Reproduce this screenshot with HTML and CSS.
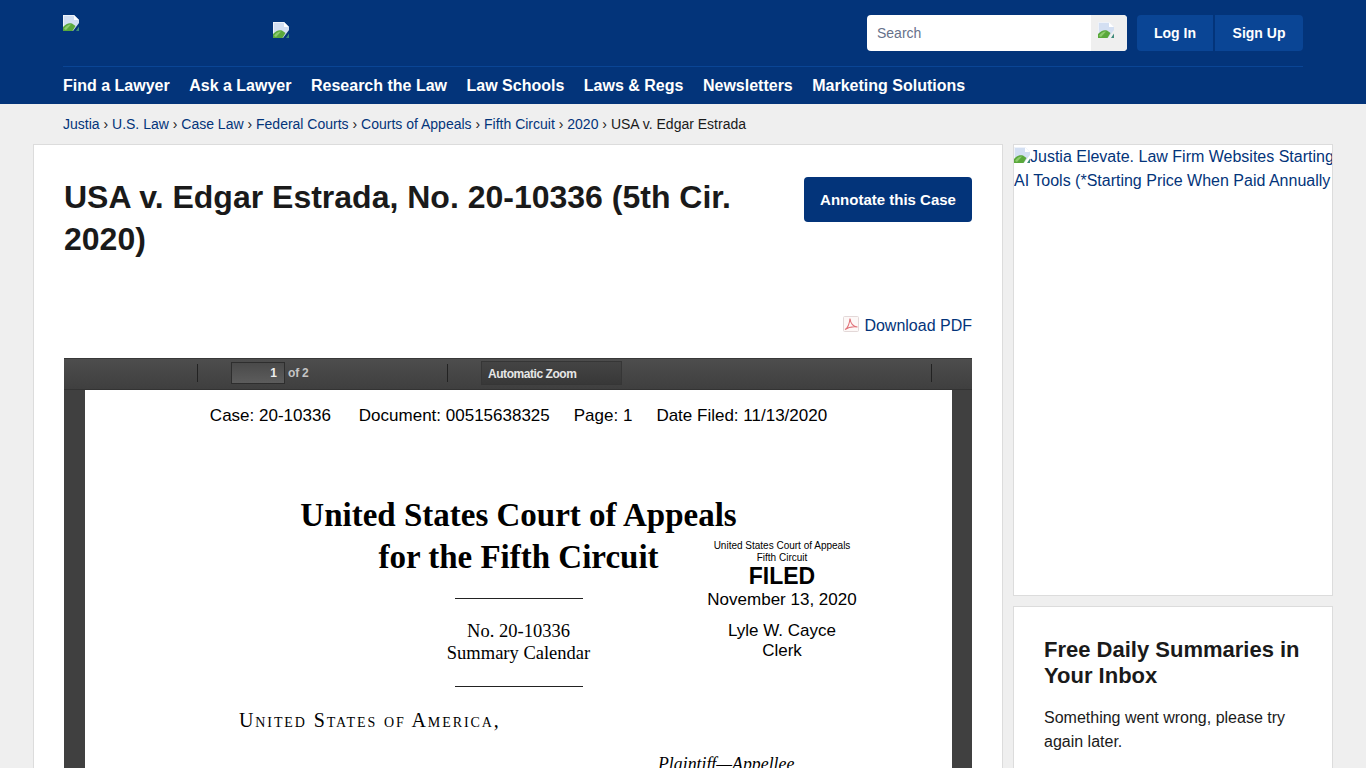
FILE: index.html

```html
<!DOCTYPE html>
<html lang="en">
<head>
  <meta charset="UTF-8" />
  <meta name="viewport" content="width=device-width, initial-scale=1.0" />
  <title>USA v. Edgar Estrada, No. 20-10336 (5th Cir. 2020)</title>
  <link rel="stylesheet" href="styles.css">
</head>
<body>
  <svg class="sprite" width="0" height="0" aria-hidden="true">
    <symbol id="broken" viewBox="0 0 16 16">
      <path d="M0 0H11L16 5V8L10 16H0Z" fill="#d3dff2"/>
      <path d="M11 0V5H16Z" fill="#fff"/>
      <path d="M0 0H11V1H1V15H0Z" fill="#eef2f9"/>
      <path d="M0 16V12C3 8.500 6 7.500 9 8.500L12.500 11L9.500 16Z" fill="#5aa83c"/>
      <path d="M1 14C3 10.500 6 9 8 9.500L3 15Z" fill="#8ccb6c"/>
      <path d="M13 16L16 11.500V16Z" fill="#3d8a7a"/>
    </symbol>
  </svg>

  <header class="site-header">
    <div class="header-inner">
      <div class="header-top">
        <div class="logos">
          <svg class="broken logo-main"><use href="#broken"/></svg>
          <svg class="broken logo-sub"><use href="#broken"/></svg>
        </div>
        <form class="search">
          <span class="search-input">Search</span>
          <span class="search-btn"><svg class="broken"><use href="#broken"/></svg></span>
        </form>
        <div class="auth">
          <a class="auth-btn login" href="#">Log In</a>
          <a class="auth-btn signup" href="#">Sign Up</a>
        </div>
      </div>
      <nav class="main-nav">
        <a href="#">Find a Lawyer</a>
        <a href="#">Ask a Lawyer</a>
        <a href="#">Research the Law</a>
        <a href="#">Law Schools</a>
        <a href="#">Laws &amp; Regs</a>
        <a href="#">Newsletters</a>
        <a href="#">Marketing Solutions</a>
      </nav>
    </div>
  </header>

  <div class="crumbs">
    <a href="#">Justia</a> › <a href="#">U.S. Law</a> › <a href="#">Case Law</a> › <a href="#">Federal Courts</a> › <a href="#">Courts of Appeals</a> › <a href="#">Fifth Circuit</a> › <a href="#">2020</a> › USA v. Edgar Estrada
  </div>

  <div class="columns">
    <main class="card main-card">
      <div class="title-row">
        <h1>USA v. Edgar Estrada, No. 20-10336 (5th Cir. 2020)</h1>
        <a class="annotate" href="#">Annotate this Case</a>
      </div>
      <div class="download">
        <svg class="pdf-icon" viewBox="0 0 16 16">
          <rect x=".5" y=".5" width="15" height="15" rx="1" fill="#fdf8f7" stroke="#e3d8d8"/>
          <path d="M2 13.500C4.500 12 6.500 8 7 2.500C7.500 7 10 10.500 14.500 11C10 10.500 5.500 11 2 13.500Z" fill="none" stroke="#e0737a" stroke-width="1.100"/>
        </svg>
        <a href="#">Download PDF</a>
      </div>
      <section class="viewer">
        <div class="toolbar">
          <span class="tool-sep sep-one"></span>
          <span class="page-box">1</span>
          <span class="page-of">of 2</span>
          <span class="tool-sep sep-two"></span>
          <span class="zoom-box">Automatic Zoom</span>
          <span class="tool-sep sep-three"></span>
        </div>
        <div class="pdf-page">
          <div class="pdf-head">
            <span class="head-case">Case: 20-10336</span>
            <span>Document: 00515638325</span>
            <span>Page: 1</span>
            <span>Date Filed: 11/13/2020</span>
          </div>
          <h2 class="court">United States Court of Appeals<br>for the Fifth Circuit</h2>
          <div class="rule"></div>
          <p class="docket">No. 20-10336<br>Summary Calendar</p>
          <div class="rule rule-low"></div>
          <p class="party">United States of America,</p>
          <p class="role">Plaintiff—Appellee</p>
          <div class="stamp">
            <div class="stamp-small">United States Court of Appeals<br>Fifth Circuit</div>
            <div class="stamp-filed">FILED</div>
            <div class="stamp-date">November 13, 2020</div>
            <div class="stamp-clerk">Lyle W. Cayce<br>Clerk</div>
          </div>
        </div>
      </section>
    </main>

    <aside class="side">
      <div class="card ad">
        <a href="#"><svg class="broken ad-img"><use href="#broken"/></svg>Justia Elevate. Law Firm Websites Starting<br>AI Tools (*Starting Price When Paid Annually</a>
      </div>
      <div class="card summaries">
        <h3>Free Daily Summaries in Your Inbox</h3>
        <p>Something went wrong, please try again later.</p>
      </div>
    </aside>
  </div>
</body>
</html>
```

FILE: styles.css

```css
html, body {
  height: 100vh;
  overflow: hidden;
}
body {
  margin: 0;
  background: #efefef;
  color: #1a1a1a;
  font-family: "Liberation Sans", Arial, sans-serif;
  font-size: 16px;
}
a { color: #03347a; text-decoration: none; }
.sprite { position: absolute; }
.broken { display: block; width: 16px; height: 16px; }

/* header */
.site-header { background: #03347a; height: 104px; }
.header-inner { width: 1240px; margin: 0 auto; }
.header-top {
  display: flex;
  height: 66px;
  border-bottom: 1px solid #0a4595;
}
.logos { flex: 1; display: flex; padding-top: 15px; }
.logo-sub { margin: 7px 0 0 194px; }
.search {
  display: flex;
  width: 260px;
  height: 36px;
  margin-top: 15px;
  background: #fff;
  border-radius: 4px;
  overflow: hidden;
}
.search-input {
  flex: 1;
  padding-left: 10px;
  line-height: 36px;
  font-size: 14px;
  color: #67718a;
}
.search-btn { width: 36px; background: #efefef; padding: 7px 0 0 7px; box-sizing: border-box; }
.auth { display: flex; gap: 2px; margin: 15px 0 0 10px; }
.auth-btn {
  height: 36px;
  line-height: 36px;
  background: #0a4595;
  color: #fff;
  font-size: 14px;
  font-weight: bold;
  text-align: center;
}
.login { width: 76px; border-radius: 4px 0 0 4px; }
.signup { width: 88px; border-radius: 0 4px 4px 0; }
.main-nav { display: flex; gap: 19.500px; padding-top: 9px; }
.main-nav a { color: #fff; font-weight: bold; font-size: 16px; line-height: 19px; }

/* breadcrumb */
.crumbs {
  width: 1240px;
  margin: 0 auto;
  height: 40px;
  line-height: 40px;
  font-size: 14px;
  color: #1a1a1a;
}

/* columns */
.columns {
  display: flex;
  gap: 10px;
  width: 1300px;
  margin: 0 auto;
  align-items: flex-start;
}
.card {
  background: #fff;
  border: 1px solid #dcdcdc;
  box-sizing: border-box;
}
.main-card { width: 970px; padding: 31px 30px 40px; }
.title-row { display: flex; justify-content: space-between; align-items: flex-start; height: 131px; }
h1 {
  width: 720px;
  margin: 0;
  font-size: 32px;
  line-height: 42px;
}
.annotate {
  width: 168px;
  height: 45px;
  line-height: 46px;
  margin-top: 1px;
  background: #03347a;
  color: #fff;
  border-radius: 4px;
  font-size: 15px;
  font-weight: bold;
  text-align: center;
}
.download {
  display: flex;
  justify-content: flex-end;
  align-items: center;
  gap: 5px;
  height: 24px;
  margin-top: 7px;
  line-height: 24px;
}
.pdf-icon { width: 16px; height: 16px; margin-top: -4px; }

/* pdf viewer */
.viewer {
  margin-top: 20px;
  background: #404040;
  padding: 0 20px 0 21px;
  height: 700px;
}
.toolbar {
  display: flex;
  align-items: center;
  height: 32px;
  margin: 0 -20px 0 -21px;
  padding-bottom: 2px;
  background: linear-gradient(#4d4d4d, #3f3f3f);
  border-top: 1px solid #383838;
  border-bottom: 1px solid #333;
  box-sizing: border-box;
  font-size: 12px;
  font-weight: bold;
  color: #d9d9d9;
}
.tool-sep { width: 1px; height: 18px; background: #222; }
.sep-one { margin-left: 133px; }
.page-box {
  width: 54px;
  height: 22px;
  line-height: 21px;
  margin-left: 33px;
  padding-right: 7px;
  box-sizing: border-box;
  background: linear-gradient(#4a4a4a, #5c5c5c);
  border: 1px solid #2e2e2e;
  text-align: right;
  color: #eee;
}
.page-of { width: 159px; margin-left: 3px; color: #c4c4c4; letter-spacing: -.2px; }
.zoom-box {
  width: 141px;
  height: 24px;
  line-height: 24px;
  margin-left: 33px;
  padding-left: 6px;
  box-sizing: border-box;
  background: linear-gradient(#444, #383838);
  border: 1px solid #363636;
  letter-spacing: -.45px;
  color: #e6e6e6;
}
.sep-three { margin-left: 309px; }
.pdf-page {
  position: relative;
  background: #fff;
  height: 668px;
  color: #000;
  text-align: center;
}
.pdf-head {
  display: flex;
  justify-content: center;
  gap: 24px;
  padding-top: 16px;
  font-size: 17px;
  line-height: 20px;
}
.head-case { margin-right: 4px; }
.court {
  margin: 68px 0 0;
  font-family: "Liberation Serif", serif;
  font-size: 33px;
  line-height: 42px;
  font-weight: bold;
}
.rule { width: 128px; height: 1px; margin: 20px auto 0; background: #222; }
.rule-low { margin-top: 22px; }
.docket {
  margin: 21px 0 0;
  font-family: "Liberation Serif", serif;
  font-size: 18.500px;
  line-height: 22px;
}
.party {
  margin: 22px 0 0 154px;
  font-family: "Liberation Serif", serif;
  font-variant: small-caps;
  font-size: 20px;
  line-height: 22px;
  letter-spacing: 1.900px;
  text-align: left;
}
.role {
  margin: 22px 0 0 573px;
  font-family: "Liberation Serif", serif;
  font-style: italic;
  font-size: 17.800px;
  line-height: 22px;
  text-align: left;
}
.stamp {
  position: absolute;
  left: 597px;
  top: 150px;
  width: 200px;
}
.stamp-small { font-size: 10px; line-height: 12px; }
.stamp-filed { font-size: 23px; font-weight: bold; line-height: 24px; }
.stamp-date { font-size: 17px; line-height: 24px; }
.stamp-clerk { margin-top: 9px; font-size: 17px; line-height: 20px; }

/* sidebar */
.side { width: 320px; display: flex; flex-direction: column; gap: 10px; }
.ad {
  height: 452px;
  overflow: hidden;
  line-height: 24px;
  white-space: nowrap;
}
.ad-img { display: inline-block; vertical-align: -1px; }
.summaries { padding: 30px; height: 300px; }
.summaries h3 { margin: 0; font-size: 22px; line-height: 26px; }
.summaries p { margin: 17px 0 0; line-height: 24px; }
```
